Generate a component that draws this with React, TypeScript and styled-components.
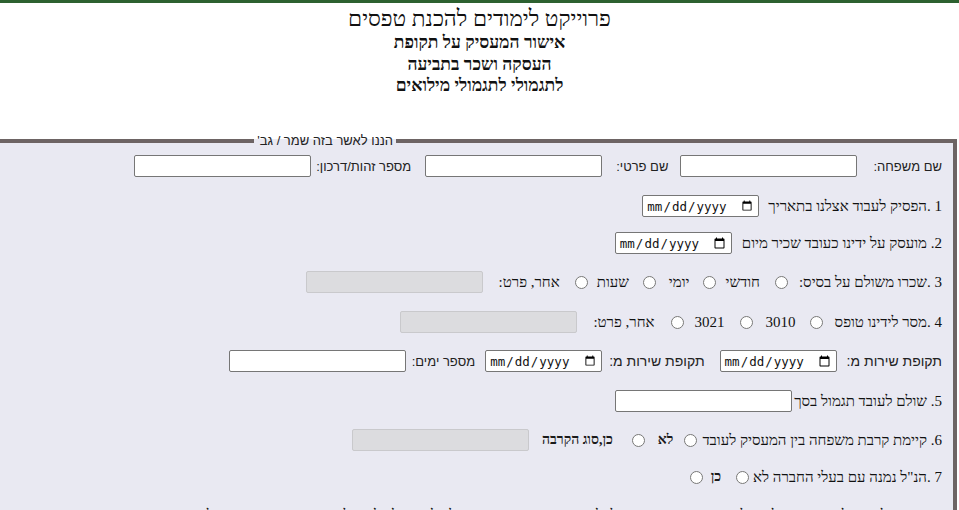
import React from "react";
import styled, { createGlobalStyle } from "styled-components";

const GlobalStyle = createGlobalStyle`
  html, body { margin: 0; padding: 0; background: #ffffff; }
  body {
    direction: rtl;
    font-family: "Liberation Serif", "DejaVu Serif", serif;
    color: #111111;
    overflow: hidden;
  }
`;

const Page = styled.div`
  border-top: 3px solid #2d6130;
  height: 507px;
  overflow: hidden;
`;

const Header = styled.header`
  text-align: center;
  padding-top: 3px;
  height: 131px;
  box-sizing: border-box;
`;

const Title = styled.h1`
  margin: 0;
  font-size: 22.5px;
  font-weight: normal;
  line-height: 26px;
`;

const Sub = styled.div`
  font-size: 17.5px;
  font-weight: bold;
  line-height: 21.5px;
`;

const Box = styled.fieldset`
  margin: 0 2px 0 0;
  padding: 0 11px 0 0;
  border: 4px solid #6d6464;
  border-left: none;
  border-bottom: none;
  background: #e9e9f2;
  min-width: 0;
`;

const Legend = styled.legend`
  margin-right: 546px;
  padding: 0 3px;
  font-family: "Liberation Sans", "DejaVu Sans", sans-serif;
  font-size: 13px;
  line-height: 14px;
  color: #222;
`;

const Row = styled.div<{ $mt: number }>`
  display: flex;
  align-items: center;
  height: 22px;
  margin-top: ${(p) => p.$mt}px;
  white-space: nowrap;
`;

const Label = styled.span<{ $ml?: number; $size?: number }>`
  font-family: "Liberation Sans", "DejaVu Sans", sans-serif;
  font-size: ${(p) => p.$size ?? 13}px;
  color: #222;
  margin-left: ${(p) => p.$ml ?? 16}px;
`;

const Text = styled.span<{ $ml?: number }>`
  font-size: 15px;
  margin-left: ${(p) => p.$ml ?? 14}px;
`;

const Choice = styled.span<{ $ml?: number }>`
  font-size: 14px;
  font-weight: bold;
  color: #1a1a1a;
  margin-left: ${(p) => p.$ml ?? 14}px;
`;

const TextInput = styled.input<{ $ml?: number }>`
  box-sizing: border-box;
  width: 177px;
  height: 22px;
  margin: 0 0 0 ${(p) => p.$ml ?? 0}px;
  padding: 1px 3px;
  border: 1px solid #767676;
  border-radius: 2px;
  background: ${(p) => (p.disabled ? "#dcdcdf" : "#ffffff")};
  border-color: ${(p) => (p.disabled ? "#c9c9cc" : "#767676")};
  font-size: 13px;
`;

const DateInput = styled.input<{ $ml?: number }>`
  box-sizing: border-box;
  width: 117px;
  height: 22px;
  margin: 0 0 0 ${(p) => p.$ml ?? 0}px;
  padding: 1px 3px;
  direction: ltr;
  border: 1px solid #767676;
  border-radius: 2px;
  background: #ffffff;
  font-family: "DejaVu Sans Mono", monospace;
  font-size: 12.5px;
  color: #111;
`;

const Radio = styled.input<{ $ml?: number }>`
  width: 13px;
  height: 13px;
  margin: 0 0 0 ${(p) => p.$ml ?? 14}px;
  flex: none;
`;

export default function App() {
  return (
    <Page>
      <GlobalStyle />
      <Header>
        <Title>פרוייקט לימודים להכנת טפסים</Title>
        <Sub>אישור המעסיק על תקופת</Sub>
        <Sub>העסקה ושכר בתביעה</Sub>
        <Sub>לתגמולי לתגמולי מילואים</Sub>
      </Header>
      <Box>
        <Legend>הננו לאשר בזה שמר / גב'</Legend>
        <Row $mt={7}>
          <Label $ml={16}>שם משפחה:</Label>
          <TextInput type="text" $ml={12} />
          <Label $ml={14}>שם פרטי:</Label>
          <TextInput type="text" $ml={14} />
          <Label $ml={5}>מספר זהות/דרכון:</Label>
          <TextInput type="text" />
        </Row>
        <Row $mt={18}>
          <Text $ml={9}>1 .הפסיק לעבוד אצלנו בתאריך</Text>
          <DateInput type="date" />
        </Row>
        <Row $mt={15}>
          <Text $ml={10}>2. מועסק על ידינו כעובד שכיר מיום</Text>
          <DateInput type="date" />
        </Row>
        <Row $mt={17}>
          <Text $ml={11}>3 .שכרו משולם על בסיס:</Text>
          <Radio type="radio" name="basis" $ml={15} />
          <Text $ml={9}>חודשי</Text>
          <Radio type="radio" name="basis" $ml={14} />
          <Text $ml={13}>יומי</Text>
          <Radio type="radio" name="basis" $ml={14} />
          <Text $ml={9}>שעות</Text>
          <Radio type="radio" name="basis" $ml={15} />
          <Text $ml={16}>אחר, פרט:</Text>
          <TextInput type="text" disabled />
        </Row>
        <Row $mt={18}>
          <Text $ml={12}>4 .מסר לידינו טופס</Text>
          <Radio type="radio" name="form" $ml={14} />
          <Text $ml={13}>3010</Text>
          <Radio type="radio" name="form" $ml={15} />
          <Text $ml={11}>3021</Text>
          <Radio type="radio" name="form" $ml={16} />
          <Text $ml={16}>אחר, פרט:</Text>
          <TextInput type="text" disabled />
        </Row>
        <Row $mt={17}>
          <Label $ml={10} $size={14}>תקופת שירות מ:</Label>
          <DateInput type="date" $ml={15} />
          <Label $ml={7} $size={14}>תקופת שירות מ:</Label>
          <DateInput type="date" $ml={10} />
          <Label $ml={6} $size={13}>מספר ימים:</Label>
          <TextInput type="text" />
        </Row>
        <Row $mt={18}>
          <Text $ml={2}>5. שולם לעובד תגמול בסך</Text>
          <TextInput type="text" />
        </Row>
        <Row $mt={17}>
          <Text $ml={5}>6. קיימת קרבת משפחה בין המעסיק לעובד</Text>
          <Radio type="radio" name="rel" $ml={11} />
          <Choice $ml={13}>לא</Choice>
          <Radio type="radio" name="rel" $ml={19} />
          <Choice $ml={13}>כן,סוג הקרבה</Choice>
          <TextInput type="text" disabled />
        </Row>
        <Row $mt={15}>
          <Text $ml={4}>7 .הנ"ל נמנה עם בעלי החברה לא</Text>
          <Radio type="radio" name="own" $ml={15} />
          <Choice $ml={8}>כן</Choice>
          <Radio type="radio" name="own" />
        </Row>
        <Row $mt={16}>
          <Text $ml={0}>8. העובד לא קיבל מאתנו תשלום כלשהו בעד התקופה הנ"ל, למעט השכר החודשי הרגיל, ולא יקבל כל תשלום נוסף בגין שירות המילואים</Text>
        </Row>
      </Box>
    </Page>
  );
}
